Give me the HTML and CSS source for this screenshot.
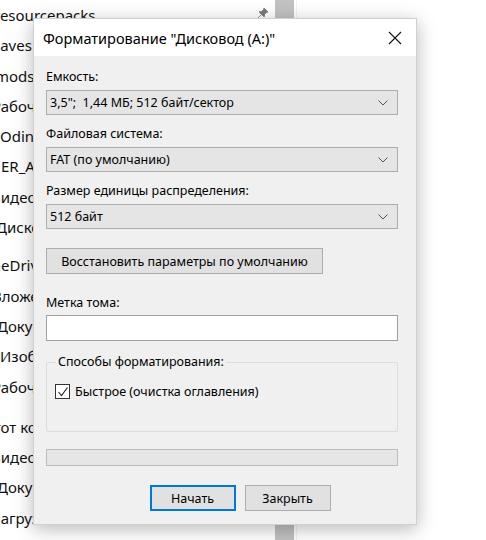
FILE: index.html
```html
<!DOCTYPE html>
<html lang="ru">
<head>
    <meta charset="UTF-8">
    <title>Форматирование</title>
    <link rel="stylesheet" href="styles.css">
</head>
<body>
    <div class="explorer">
        <div class="nav">
            <ul class="tree">
                <li class="item" style="text-indent:-6px">resourcepacks</li>
                <li class="item" style="text-indent:-7px">saves</li>
                <li class="item" style="text-indent:-5px">mods</li>
                <li class="item" style="text-indent:-8px">Рабочий стол</li>
                <li class="item" style="text-indent:0px">Odin3_v3.14</li>
                <li class="item" style="text-indent:1px">ER_ARCHIVE</li>
                <li class="item" style="text-indent:-9px">Видео</li>
                <li class="item" style="text-indent:-4px">Дисковод (A:)</li>
                <li class="item gap-one" style="text-indent:-20px">OneDrive</li>
                <li class="item" style="text-indent:-8px">Вложения</li>
                <li class="item" style="text-indent:-3px">Документы</li>
                <li class="item" style="text-indent:0px">Изображения</li>
                <li class="item" style="text-indent:-8px">Рабочий стол</li>
                <li class="item gap-two" style="text-indent:-16px">Этот компьютер</li>
                <li class="item" style="text-indent:-9px">Видео</li>
                <li class="item" style="text-indent:-3px">Документы</li>
                <li class="item" style="text-indent:-8px">Загрузки</li>
            </ul>
            <svg class="pin" width="12" height="12" viewBox="0 0 12 12">
                <path d="M7 1 L11 5 L9.5 5.5 L7.5 7.5 L7.5 9.5 L6.5 9.5 L2.5 5.5 L2.5 4.5 L4.5 4.5 L6.5 2.5 Z M4.5 7.5 L1 11" fill="#7a7a7a" stroke="#7a7a7a" stroke-width="0.8"/>
            </svg>
            <div class="scrollbar"><div class="thumb"></div></div>
        </div>
    </div>

    <div class="dialog">
        <div class="titlebar">
            <span class="title">Форматирование "Дисковод (A:)"</span>
            <svg class="close" width="14" height="14" viewBox="0 0 14 14">
                <path d="M1 1 L13 13 M13 1 L1 13" stroke="#111" stroke-width="1.1" fill="none"/>
            </svg>
        </div>
        <div class="content">
            <label class="label">Емкость:</label>
            <div class="combo">
                <span>3,5";&nbsp; 1,44 МБ; 512 байт/сектор</span>
                <svg class="chevron" width="10" height="6" viewBox="0 0 10 6"><path d="M0.5 0.5 L5 5 L9.5 0.5" stroke="#555" fill="none"/></svg>
            </div>

            <label class="label">Файловая система:</label>
            <div class="combo">
                <span>FAT (по умолчанию)</span>
                <svg class="chevron" width="10" height="6" viewBox="0 0 10 6"><path d="M0.5 0.5 L5 5 L9.5 0.5" stroke="#555" fill="none"/></svg>
            </div>

            <label class="label">Размер единицы распределения:</label>
            <div class="combo">
                <span>512 байт</span>
                <svg class="chevron" width="10" height="6" viewBox="0 0 10 6"><path d="M0.5 0.5 L5 5 L9.5 0.5" stroke="#555" fill="none"/></svg>
            </div>

            <button class="btn btn-restore">Восстановить параметры по умолчанию</button>

            <label class="label label-volume">Метка тома:</label>
            <input class="textbox" type="text">

            <fieldset class="options">
                <legend>Способы форматирования:</legend>
                <div class="check">
                    <span class="box">
                        <svg width="12" height="12" viewBox="0 0 12 12"><path d="M1.5 6 L4.5 9.5 L10.5 1.5" stroke="#222" stroke-width="1.1" fill="none"/></svg>
                    </span>
                    <span>Быстрое (очистка оглавления)</span>
                </div>
            </fieldset>

            <div class="progress"></div>

            <div class="actions">
                <button class="btn btn-default">Начать</button>
                <button class="btn">Закрыть</button>
            </div>
        </div>
    </div>
</body>
</html>
```

FILE: styles.css
```css
* {
    box-sizing: border-box;
    margin: 0;
    padding: 0;
}

body {
    font-family: 'Noto Sans', 'Segoe UI', sans-serif;
    background: #fff;
    width: 486px;
    height: 540px;
    overflow: hidden;
    position: relative;
}

.explorer {
    display: flex;
    height: 540px;
}

.nav {
    position: relative;
    width: 297px;
    height: 100%;
    display: flex;
    border-right: 1px solid #f2f2f2;
}

.tree {
    list-style: none;
    flex: 1;
    overflow: hidden;
}

.item {
    height: 30.3px;
    line-height: 30px;
    font-size: 15px;
    color: #111;
    white-space: nowrap;
}

.item.gap-one {
    margin-top: 8px;
}

.item.gap-two {
    margin-top: 10px;
}

.pin {
    position: absolute;
    left: 257px;
    top: 7px;
}

.scrollbar {
    width: 19px;
    margin-right: 2px;
}

.thumb {
    background: #c2c2c2;
    height: 100%;
}

/* dialog */
.dialog {
    position: absolute;
    left: 33px;
    top: 18px;
    width: 384px;
    height: 507px;
    background: #f0f0f0;
    border: 1px solid #d0d0d0;
    box-shadow: 0 4px 18px rgba(0, 0, 0, 0.28);
    color: #000;
    font-size: 12.5px;
}

.titlebar {
    height: 37px;
    background: #fff;
    display: flex;
    align-items: center;
    justify-content: space-between;
    padding: 0 14px 0 9px;
}

.title {
    font-size: 14.5px;
    color: #000;
}

.content {
    display: flex;
    flex-direction: column;
    padding: 12px 18px 0 12px;
}

.label {
    display: block;
    line-height: 18px;
    margin-bottom: 4px;
}

.combo {
    height: 25px;
    background: #e5e5e5;
    border: 1px solid #adadad;
    display: flex;
    align-items: center;
    justify-content: space-between;
    padding: 0 9px 0 3px;
    margin-bottom: 10px;
}

.btn {
    font-family: inherit;
    font-size: 12.5px;
    color: #000;
    background: #e1e1e1;
    border: 1px solid #adadad;
    height: 26px;
}

.btn-restore {
    width: 277px;
    margin-top: 9px;
    align-self: flex-start;
}

.label-volume {
    margin-top: 20px;
    margin-bottom: 3px;
}

.textbox {
    height: 26px;
    background: #fff;
    border: 1px solid #a0a0a0;
    outline: none;
}

.options {
    margin-top: 13px;
    height: 78px;
    border: 1px solid #dcdcdc;
    border-radius: 2px;
    padding: 8px 8px 0 8px;
}

.options legend {
    padding: 0 2px;
    margin-left: 1px;
    line-height: 16px;
}

.check {
    display: flex;
    align-items: center;
    gap: 5px;
    margin-top: 5px;
}

.box {
    width: 15px;
    height: 15px;
    border: 1px solid #333;
    background: #fff;
    display: flex;
    align-items: center;
    justify-content: center;
}

.progress {
    margin-top: 17px;
    height: 17px;
    background: #e6e6e6;
    border: 1px solid #bcbcbc;
}

.actions {
    display: flex;
    justify-content: center;
    gap: 9px;
    margin-top: 19px;
    padding-left: 36px;
}

.actions .btn {
    width: 86px;
}

.btn-default {
    border: 2px solid #0078d7;
}
```
